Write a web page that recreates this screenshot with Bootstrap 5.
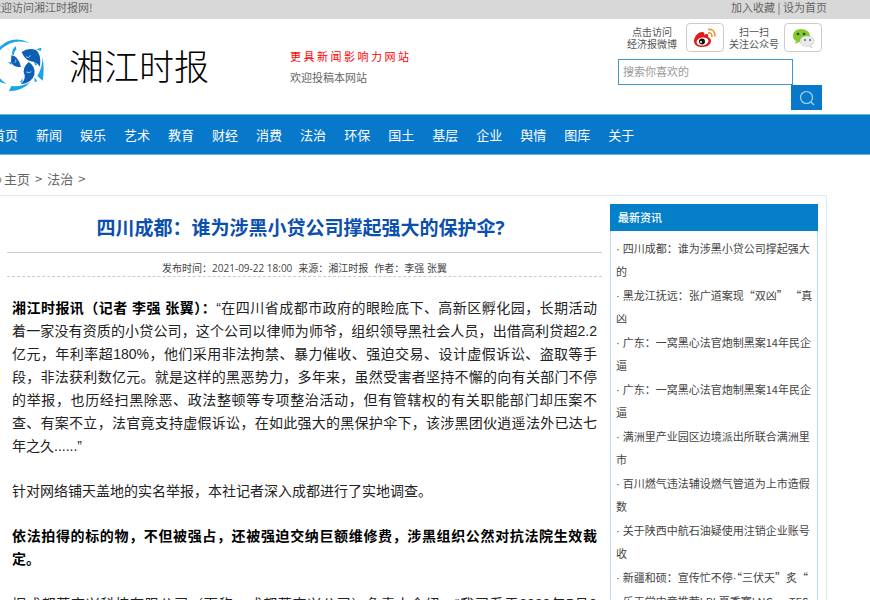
<!DOCTYPE html>
<html lang="zh-CN">
<head>
<meta charset="utf-8">
<meta name="viewport" content="width=device-width, initial-scale=1">
<title>湘江时报</title>
<link rel="stylesheet" href="https://cdn.jsdelivr.net/npm/bootstrap@5.3.0/dist/css/bootstrap.min.css">
<style>
body{font-family:"Noto Sans CJK SC",sans-serif;font-size:11px;line-height:16px;color:#666;background:#fff}
a{color:inherit;text-decoration:none}
.topbar{background:#d8d8d8;height:19px;padding-right:43px;line-height:14px}
.topbar-hello{margin-left:-10px}
.masthead{height:95px;padding-right:48px}
.brand-name{font-size:35px;line-height:40px;font-weight:300;color:#000;margin:26px 0 0 9px}
.slogan{margin:28px 0 0 81px}
.slogan-red{width:119px;color:#f00;text-align-last:justify;line-height:18px}
.slogan-sub{line-height:24px}
.tools{width:204px;padding-top:4px}
.tool-row{gap:5px}
.tool-label{font-size:10px;line-height:12px;color:#555}
.icon-btn{width:38px;height:29px;border:1px solid #ccc;border-radius:4px;background:#fff}
.search-input{width:175px;height:26px;border:1px solid #3f97d6;border-radius:0;font-size:11px;padding:0 4px 3px;color:#666;margin-top:7px}
.search-input::placeholder{color:#999}
.search-btn{width:31px;height:25px;border:0;background:#0878cb}
.mainnav{background:#0878cb;border:1px solid #6fb2e0;border-width:1px 0;height:41px;gap:18px;font-size:13px;color:#fff;overflow:hidden}
.mainnav li:first-child{margin-left:-8px}
.crumbs{font-size:13px;line-height:20px;padding-top:14px;height:40px;gap:5px}
.crumb-mark{margin-right:-4px}
.page-frame{border:1px solid #dceaf2;border-width:1px 1px 0 0;margin-right:43px;padding:8px 8px 0 7px;gap:8px}
.headline{font-size:19px;line-height:28px;font-weight:700;color:#0b50ae;font-family:"Open Sans","Noto Sans CJK SC",sans-serif;margin:10px 0 10px;padding-right:8px}
.meta-line{font-size:10px;line-height:14px;font-family:"Open Sans","Noto Sans CJK SC",sans-serif;color:#444;border-top:1px solid #ccc;border-bottom:1px dashed #ccc;padding:8px 0 1px;gap:6px}
.story{font-size:14px;line-height:23px;color:#222;font-family:"Liberation Sans","Noto Sans CJK SC",sans-serif;padding:20px 5px 0}
.story p{margin-bottom:22px}
.story strong{color:#000}
.full-line{display:block;text-align-last:justify;white-space:nowrap}
.latest{width:208px;border:1px solid #bddcf1}
.latest-head{background:#0480c8;color:#fff;font-size:11px;line-height:27px;font-weight:500;margin:-1px -1px 0;padding-left:8px}
.latest-list{padding:6px 5px 0;line-height:23px;color:#444;white-space:nowrap}
.latest-list li{margin-bottom:1px}
.dot{font-family:"Liberation Sans",sans-serif;line-height:1}
</style>
<script src="https://cdn.jsdelivr.net/npm/bootstrap@5.3.0/dist/js/bootstrap.bundle.min.js"></script>
</head>
<body class="vh-100 overflow-hidden">
<div class="topbar d-flex justify-content-between overflow-hidden">
  <span class="topbar-hello">欢迎访问湘江时报网!</span>
  <span><a href="#">加入收藏</a> | <a href="#">设为首页</a></span>
</div>

<header class="masthead d-flex align-items-start">
  <a href="#" class="d-flex align-items-start text-nowrap">
    <svg class="mt-2" width="60" height="74" viewBox="0 -9 180 222" aria-hidden="true">
      <g fill="#1ba5e8">
        <path d="M0 50Q38 14 88 39Q38 23 0 61Z"/>
        <path d="M0 145Q8 156 20 161Q6 160 0 155Z"/>
        <path d="M27 184L34 168Q66 171 92 155Q70 181 27 184Z"/>
        <path d="M128 82Q134 118 128 152L112 138Q127 114 128 82Z"/>
        <path d="M36 73Q36 57 47 48L49 59Q41 64 42 76Z"/>
        <path d="M108 58L124 53L123 63Z"/>
        <path d="M24 97L36 96L34 105ZM60 156L68 145L67 158ZM102 94L112 104L105 106ZM103 142L112 154L104 156Z"/>
      </g>
      <g fill="#0b5fb5">
        <path d="M34 76Q53 76 63 110Q39 114 33 94Z"/>
        <path d="M65 66Q84 52 108 60Q124 70 120 110Q110 96 92 94Q75 90 65 66Z"/>
        <path d="M86 96Q107 108 103 134Q96 159 62 163Q76 151 74 135Q64 115 86 96Z"/>
      </g>
      <path d="M78 80Q88 86 91 76M79 126Q88 130 94 125M43 99Q50 95 47 89" fill="none" stroke="#fff" stroke-width="2"/>
    </svg>
    <span class="brand-name">湘江时报</span>
  </a>
  <div class="slogan">
    <div class="slogan-red">更具新闻影响力网站</div>
    <div class="slogan-sub">欢迎投稿本网站</div>
  </div>
  <div class="tools ms-auto flex-shrink-0">
    <div class="tool-row d-flex align-items-center justify-content-end text-center">
      <span class="tool-label me-1">点击访问<br>经济报微博</span>
      <a href="#" class="icon-btn d-flex align-items-center justify-content-center" aria-label="微博">
        <svg width="24" height="22" viewBox="0 0 24 22">
          <path d="M9 5C5 5 1 10 1 14c0 4 4 6 8 6 6 0 9-3 9-6 0-2-1-3-3-4 1-3-1-4-4-2 1-2 0-3-2-3Z" fill="#e21a1a"/>
          <ellipse cx="9.500" cy="14.500" rx="6" ry="4" fill="#fff" transform="rotate(-10 9.500 14.500)"/>
          <circle cx="9" cy="14.500" r="3" fill="#111"/><circle cx="8" cy="15" r="1" fill="#fff"/>
          <path d="M15 6q4-1 4 4M15 2.500q7-1 7 7" fill="none" stroke="#eb9a32" stroke-width="1.600"/>
        </svg>
      </a>
      <span class="tool-label">扫一扫<br>关注公众号</span>
      <a href="#" class="icon-btn d-flex align-items-center justify-content-center" aria-label="微信">
        <svg width="24" height="22" viewBox="0 0 24 22">
          <path d="M10 2C5 2 2 5 2 9c0 2 1 4 3 5l-1 3 4-2c7 1 11-2 11-6s-4-7-9-7Z" fill="#85c832"/>
          <circle cx="7" cy="7" r="1.300" fill="#234d13"/><circle cx="13" cy="7" r="1.300" fill="#234d13"/>
          <path d="M16 9c-4 0-7 2-7 5 0 4 4 6 9 5l3 2-1-3c2-1 3-2 3-4 0-3-3-5-7-5Z" fill="#e9e9e9" stroke="#bbb" stroke-width=".5"/>
          <circle cx="14" cy="13" r="1" fill="#666"/><circle cx="19" cy="13" r="1" fill="#666"/>
        </svg>
      </a>
    </div>
    <form class="d-flex flex-column">
      <input class="search-input" type="text" placeholder="搜索你喜欢的" aria-label="搜索你喜欢的">
      <button class="search-btn align-self-end p-0 d-flex align-items-center justify-content-center" type="button" aria-label="搜索">
        <svg width="16" height="16" viewBox="0 0 16 16" fill="none" stroke="#a9d4f2" stroke-width="1.200"><circle cx="7.500" cy="7.500" r="6"/><path d="M12 12l3 3"/></svg>
      </button>
    </form>
  </div>
</header>

<nav>
  <ul class="mainnav list-unstyled d-flex align-items-center text-nowrap mb-0">
    <li><a href="#">首页</a></li><li><a href="#">新闻</a></li><li><a href="#">娱乐</a></li><li><a href="#">艺术</a></li><li><a href="#">教育</a></li><li><a href="#">财经</a></li><li><a href="#">消费</a></li><li><a href="#">法治</a></li><li><a href="#">环保</a></li><li><a href="#">国土</a></li><li><a href="#">基层</a></li><li><a href="#">企业</a></li><li><a href="#">舆情</a></li><li><a href="#">图库</a></li><li><a href="#">关于</a></li>
  </ul>
</nav>

<div class="crumbs d-flex">
  <svg class="crumb-mark mt-2" width="3" height="6" viewBox="0 0 3 6"><path d="M0 0q3 3 0 6" fill="#999"/></svg>
  <a href="#">主页</a><span>&gt;</span><a href="#">法治</a><span>&gt;</span>
</div>

<main class="page-frame d-flex align-items-start">
  <article class="flex-grow-1">
    <h1 class="headline text-center text-nowrap">四川成都：谁为涉黑小贷公司撑起强大的保护伞?</h1>
    <div class="meta-line d-flex justify-content-center">
      <span>发布时间：2021-09-22 18:00</span><span>来源：湘江时报</span><span>作者：李强 张翼</span>
    </div>
    <div class="story">
      <p><span class="full-line"><strong>湘江时报讯（记者 李强 张翼）：</strong>“在四川省成都市政府的眼睑底下、高新区孵化园，长期活动</span><span class="full-line">着一家没有资质的小贷公司，这个公司以律师为师爷，组织领导黑社会人员，出借高利贷超2.2</span><span class="full-line">亿元，年利率超180%，他们采用非法拘禁、暴力催收、强迫交易、设计虚假诉讼、盗取等手</span><span class="full-line">段，非法获利数亿元。就是这样的黑恶势力，多年来，虽然受害者坚持不懈的向有关部门不停</span><span class="full-line">的举报，也历经扫黑除恶、政法整顿等专项整治活动，但有管辖权的有关职能部门却压案不</span><span class="full-line">查、有案不立，法官竟支持虚假诉讼，在如此强大的黑保护伞下，该涉黑团伙逍遥法外已达七</span>年之久......”</p>
      <p>针对网络铺天盖地的实名举报，本社记者深入成都进行了实地调查。</p>
      <p><strong><span class="full-line">依法拍得的标的物，不但被强占，还被强迫交纳巨额维修费，涉黑组织公然对抗法院生效裁</span>定。</strong></p>
      <p><span class="full-line">据成都蓉京兴科技有限公司（下称：成都蓉京兴公司）负责人介绍，“我司系于2020年5月9</span></p>
    </div>
  </article>
  <aside class="latest flex-shrink-0">
    <h2 class="latest-head">最新资讯</h2>
    <ul class="latest-list list-unstyled mb-0">
      <li><a href="#"><span class="dot">· </span>四川成都：谁为涉黑小贷公司撑起强大<br>的</a></li>
      <li><a href="#"><span class="dot">· </span>黑龙江抚远：张广道案现“双凶” “真<br>凶</a></li>
      <li><a href="#"><span class="dot">· </span>广东：一窝黑心法官炮制黑案14年民企<br>逼</a></li>
      <li><a href="#"><span class="dot">· </span>广东：一窝黑心法官炮制黑案14年民企<br>逼</a></li>
      <li><a href="#"><span class="dot">· </span>满洲里产业园区边境派出所联合满洲里<br>市</a></li>
      <li><a href="#"><span class="dot">· </span>百川燃气违法辅设燃气管道为上市造假<br>数</a></li>
      <li><a href="#"><span class="dot">· </span>关于陕西中航石油疑使用注销企业账号<br>收</a></li>
      <li><a href="#"><span class="dot">· </span>新疆和硕：宣传忙不停<span class="dot">·</span>“三伏天”炙“</a></li>
      <li><a href="#"><span class="dot">· </span>乐天堂中意推荐LPL夏季赛LNG vs TES</a></li>
    </ul>
  </aside>
</main>
</body>
</html>
